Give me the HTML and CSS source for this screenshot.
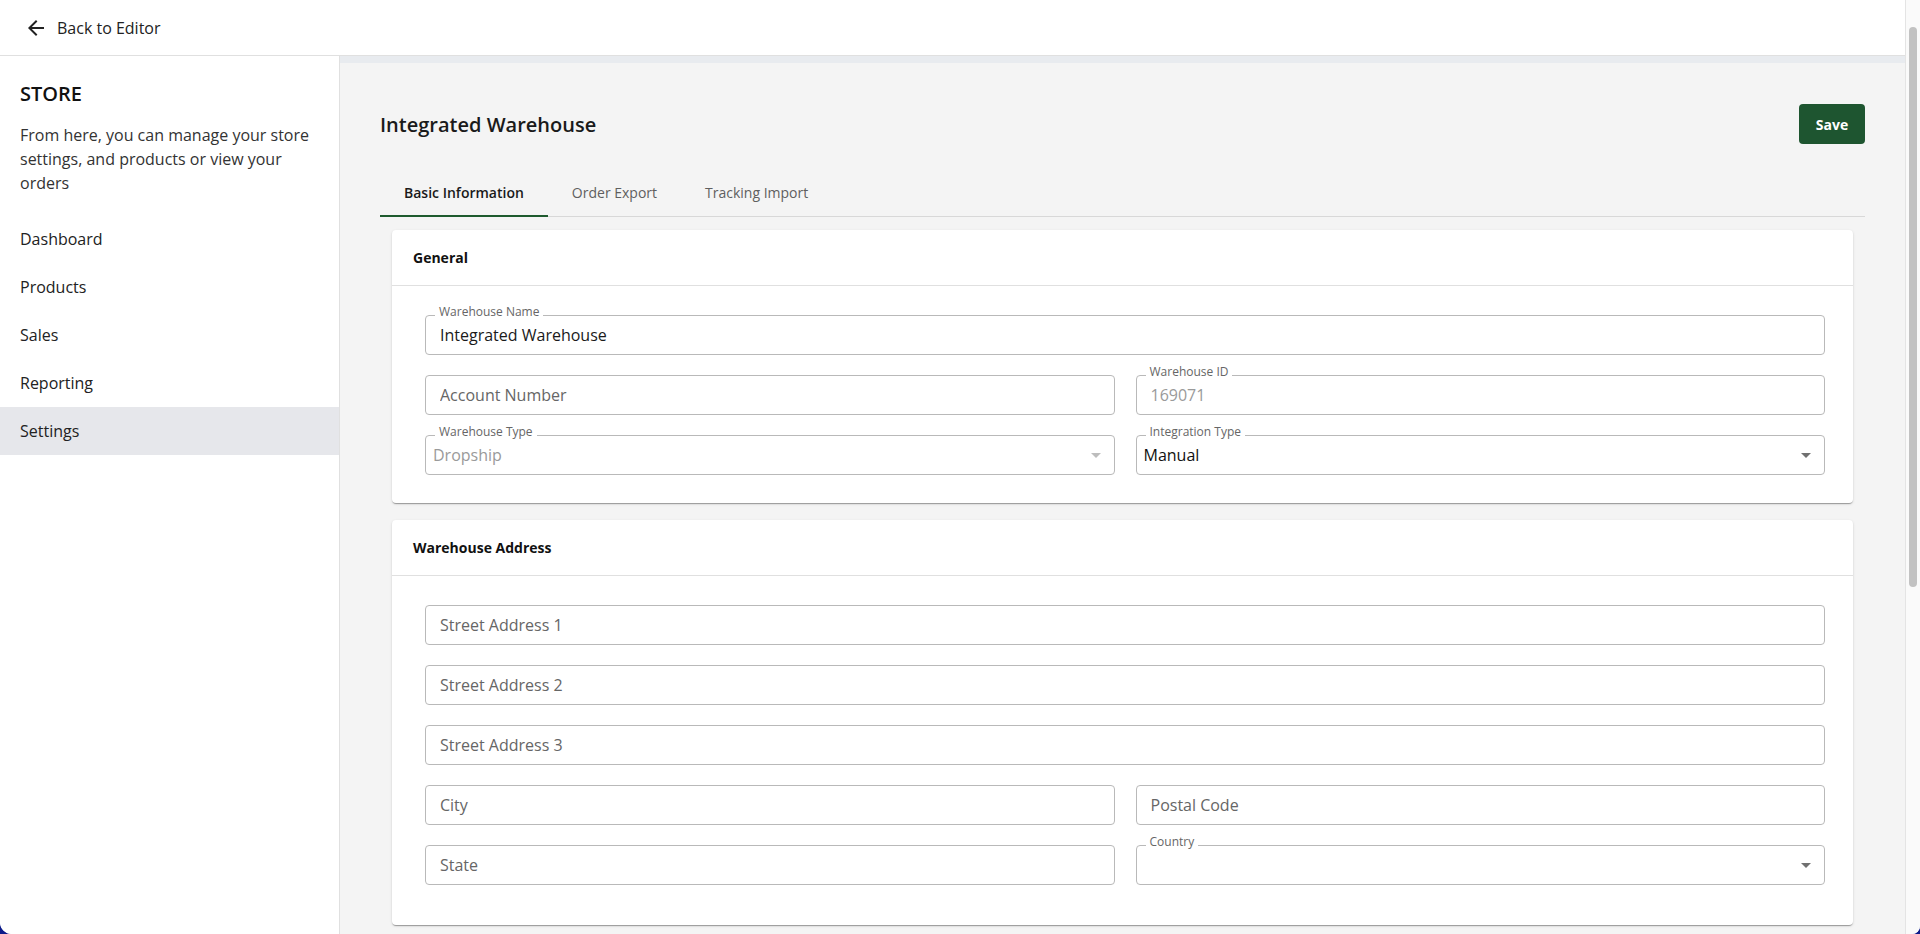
FILE: index.html
```html
<!DOCTYPE html>
<html lang="en">
<head>
<meta charset="utf-8">
<title>Integrated Warehouse</title>
<link rel="stylesheet" href="styles.css">
</head>
<body>
<div class="window">
  <div class="page">
    <header class="topbar">
      <svg class="back-icon" viewBox="0 0 24 24" width="24" height="24"><path d="M20 11H7.83l5.59-5.59L12 4l-8 8 8 8 1.41-1.41L7.83 13H20v-2z"/></svg>
      <span class="back-text">Back to Editor</span>
    </header>
    <div class="body">
      <aside class="sidebar">
        <h2 class="store-title">STORE</h2>
        <p class="store-desc">From here, you can manage your store settings, and products or view your orders</p>
        <nav class="nav">
          <div class="nav-item">Dashboard</div>
          <div class="nav-item">Products</div>
          <div class="nav-item">Sales</div>
          <div class="nav-item">Reporting</div>
          <div class="nav-item active">Settings</div>
        </nav>
      </aside>
      <main class="main">
        <div class="title-row">
          <h1 class="page-title">Integrated Warehouse</h1>
          <button class="save-btn">Save</button>
        </div>
        <div class="tabs">
          <div class="tab active">Basic Information</div>
          <div class="tab">Order Export</div>
          <div class="tab">Tracking Import</div>
        </div>
        <div class="panel">
          <section class="card">
            <div class="card-header">General</div>
            <div class="card-body grid">
              <div class="field full">
                <span class="label">Warehouse Name</span>
                <input class="input" type="text" value="Integrated Warehouse">
              </div>
              <div class="field">
                <input class="input" type="text" placeholder="Account Number">
              </div>
              <div class="field">
                <span class="label">Warehouse ID</span>
                <input class="input disabled" type="text" value="169071" disabled>
              </div>
              <div class="field">
                <span class="label">Warehouse Type</span>
                <div class="select disabled"><span class="select-value">Dropship</span><span class="caret"></span></div>
              </div>
              <div class="field">
                <span class="label">Integration Type</span>
                <div class="select"><span class="select-value">Manual</span><span class="caret"></span></div>
              </div>
            </div>
          </section>
          <section class="card address">
            <div class="card-header">Warehouse Address</div>
            <div class="card-body grid">
              <div class="field full"><input class="input" type="text" placeholder="Street Address 1"></div>
              <div class="field full"><input class="input" type="text" placeholder="Street Address 2"></div>
              <div class="field full"><input class="input" type="text" placeholder="Street Address 3"></div>
              <div class="field"><input class="input" type="text" placeholder="City"></div>
              <div class="field"><input class="input" type="text" placeholder="Postal Code"></div>
              <div class="field"><input class="input" type="text" placeholder="State"></div>
              <div class="field">
                <span class="label">Country</span>
                <div class="select"><span class="select-value"></span><span class="caret"></span></div>
              </div>
            </div>
          </section>
        </div>
      </main>
    </div>
  </div>
  <div class="scrollbar"><div class="thumb"></div></div>
</div>
</body>
</html>
```

FILE: styles.css
```css
* { box-sizing: border-box; }

html, body {
  margin: 0;
  padding: 0;
}

body {
  background: #0d1b8a;
  font-family: "Open Sans", "Noto Sans", sans-serif;
  color: #1f1f1f;
}

.window {
  display: flex;
  height: 934px;
  width: 1920px;
  overflow: hidden;
  background: #ffffff;
  border-radius: 0 0 8px 12px;
}

.page {
  flex: 1;
  display: flex;
  flex-direction: column;
  min-width: 0;
}

.topbar {
  height: 56px;
  flex: none;
  display: flex;
  align-items: center;
  padding-left: 24px;
  border-bottom: 1px solid #e0e0e0;
  background: #ffffff;
}

.back-icon {
  fill: #222222;
  display: block;
}

.back-text {
  margin-left: 9px;
  font-size: 16px;
  color: #222222;
}

.body {
  flex: 1;
  display: flex;
  min-height: 0;
}

.sidebar {
  width: 340px;
  flex: none;
  border-right: 1px solid #e0e0e0;
  background: #ffffff;
  padding-top: 24px;
}

.store-title {
  margin: 0;
  padding: 0 20px;
  font-size: 20px;
  line-height: 28px;
  font-weight: 600;
  color: #111111;
}

.store-desc {
  margin: 15px 0 0;
  padding: 0 20px;
  font-size: 16px;
  line-height: 24px;
  color: #333333;
}

.nav {
  margin-top: 20px;
}

.nav-item {
  height: 48px;
  display: flex;
  align-items: center;
  padding-left: 20px;
  font-size: 16px;
  color: #222222;
}

.nav-item.active {
  background: #e6e7eb;
}

.main {
  flex: 1;
  min-width: 0;
  background: #f4f4f4;
  border-top: 7px solid #e8ebef;
  padding: 0 40px;
}

.title-row {
  margin-top: 41px;
  height: 40px;
  display: flex;
  align-items: center;
  justify-content: space-between;
}

.page-title {
  margin: 0;
  font-size: 20px;
  font-weight: 600;
  color: #1a1a1a;
}

.save-btn {
  height: 40px;
  width: 66px;
  border: none;
  border-radius: 4px;
  background: #1e5530;
  color: #ffffff;
  font-family: inherit;
  font-size: 14px;
  font-weight: 700;
  padding: 0;
}

.tabs {
  margin-top: 25px;
  display: flex;
  height: 48px;
  border-bottom: 1px solid #d8d8d8;
}

.tab {
  height: 48px;
  padding: 0 24px;
  display: flex;
  align-items: center;
  font-size: 14px;
  color: #5f5f5f;
  margin-bottom: -1px;
  border-bottom: 2px solid transparent;
}

.tab.active {
  font-weight: 600;
  color: #1a1a1a;
  border-bottom-color: #1e5a2e;
}

.panel {
  padding: 13px 12px 0;
}

.card {
  background: #ffffff;
  border-radius: 4px;
  box-shadow: 0 2px 1px -1px rgba(0,0,0,0.2), 0 1px 1px 0 rgba(0,0,0,0.14), 0 1px 3px 0 rgba(0,0,0,0.12);
}

.card + .card {
  margin-top: 17px;
}

.card-header {
  height: 56px;
  display: flex;
  align-items: center;
  padding-left: 21px;
  border-bottom: 1px solid #e0e0e0;
  font-size: 14px;
  font-weight: 700;
  color: #111111;
}

.card-body {
  padding: 29px 28px 28px 33px;
}

.card.address .card-body {
  padding-bottom: 40px;
}

.grid {
  display: grid;
  grid-template-columns: 1fr 1fr;
  column-gap: 21px;
  row-gap: 20px;
}

.field {
  position: relative;
  height: 40px;
}

.field.full {
  grid-column: 1 / -1;
}

.label {
  position: absolute;
  top: -11px;
  left: 10px;
  padding: 0 4px;
  background: #ffffff;
  font-size: 12px;
  line-height: 16px;
  color: #666666;
  z-index: 1;
}

.input {
  width: 100%;
  height: 40px;
  border: 1px solid #b9b9b9;
  border-radius: 4px;
  padding: 0 14px;
  font-family: inherit;
  font-size: 16px;
  color: #1a1a1a;
  background: #ffffff;
  outline: none;
}

.input::placeholder {
  color: #666666;
  opacity: 1;
}

.input.disabled {
  color: #9a9a9a;
  -webkit-text-fill-color: #9a9a9a;
}

.select {
  height: 40px;
  border: 1px solid #b9b9b9;
  border-radius: 4px;
  padding: 0 7px;
  display: flex;
  align-items: center;
  justify-content: space-between;
  font-size: 16px;
  color: #111111;
  background: #ffffff;
}

.select.disabled {
  color: #9a9a9a;
}

.caret {
  width: 0;
  height: 0;
  border-left: 5px solid transparent;
  border-right: 5px solid transparent;
  border-top: 5px solid #707070;
  margin-right: 6px;
}

.select.disabled .caret {
  border-top-color: #bdbdbd;
}

.scrollbar {
  width: 15px;
  flex: none;
  border-left: 1px solid #e4e4e4;
  background: #fafafa;
  padding: 27px 0 0 3px;
}

.thumb {
  width: 8px;
  height: 560px;
  border-radius: 4px;
  background: #c2c2c2;
}
```
